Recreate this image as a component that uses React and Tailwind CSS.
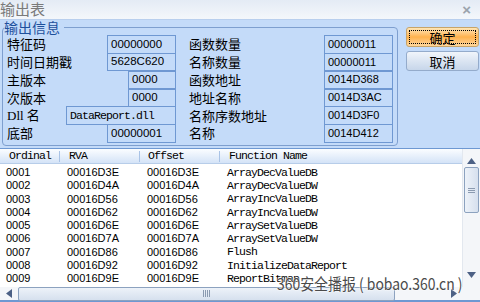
import React from "react";

const leftRows = [
  { label: "特征码", value: "00000000", w: "w-[69px]" },
  { label: "时间日期戳", value: "5628C620", w: "w-[69px]" },
  { label: "主版本", value: "0000", w: "w-[48px]" },
  { label: "次版本", value: "0000", w: "w-[48px]" },
  { label: "Dll 名", value: "DataReport.dll", w: "w-[110px]", mono: true },
  { label: "底部", value: "00000001", w: "w-[69px]" },
];

const rightRows = [
  { label: "函数数量", value: "00000011" },
  { label: "名称数量", value: "00000011" },
  { label: "函数地址", value: "0014D368" },
  { label: "地址名称", value: "0014D3AC" },
  { label: "名称序数地址", value: "0014D3F0" },
  { label: "名称", value: "0014D412" },
];

const exportsList = [
  ["0001", "00016D3E", "ArrayDecValueDB"],
  ["0002", "00016D4A", "ArrayDecValueDW"],
  ["0003", "00016D56", "ArrayIncValueDB"],
  ["0004", "00016D62", "ArrayIncValueDW"],
  ["0005", "00016D6E", "ArraySetValueDB"],
  ["0006", "00016D7A", "ArraySetValueDW"],
  ["0007", "00016D86", "Flush"],
  ["0008", "00016D92", "InitializeDataReport"],
  ["0009", "00016D9E", "ReportBitmap"],
];

const cjk = "font-['Noto_Sans_CJK_SC',sans-serif]";
const mono = "font-['Liberation_Mono','Noto_Sans_CJK_SC',monospace]";
const sans = "font-['Liberation_Sans',sans-serif]";

export default function App() {
  return (
    <div className="relative w-[480px] h-[302px] overflow-hidden bg-[#c4dbf9] flex flex-col">
      {/* title bar */}
      <div className="h-[20px] shrink-0 flex items-start justify-between bg-gradient-to-b from-[#e4ebf5] to-[#f4f7fb] border-b border-[#b9cfee]">
        <span className={`${cjk} text-[15px] leading-[17px] text-[#7a7a7a]`}>输出表</span>
        <span className={`${sans} text-[15px] font-bold leading-[15px] text-[#9aa3ad] mr-[9px] mt-[2px]`}>×</span>
      </div>

      {/* info */}
      <div className="flex shrink-0 h-[128px]">
        <fieldset className="ml-[2px] mt-[0px] w-[396px] h-[126px] border border-[#7e9fcf] rounded-[4px] px-0 pb-0">
          <legend className={`${cjk} text-[14px] leading-[15px] text-[#1d4f9c] ml-[1px] pr-[4px]`}>输出信息</legend>
          <div className="flex">
            <div className="w-[173px] flex flex-col">
              {leftRows.map((r) => (
                <div key={r.label} className="h-[17.8px] flex items-center justify-between">
                  <span
                    className={`${
                      r.mono ? "font-['Liberation_Serif','Noto_Sans_CJK_SC',serif]" : cjk
                    } text-[13px] leading-none text-black ml-[4px]`}
                  >
                    {r.label}
                  </span>
                  <div
                    className={`${r.w} h-[18.5px] -mb-[1px] border-[1.5px] border-[#6f98d2] flex items-center pl-[3px] leading-none ${
                      r.mono ? `${mono} text-[11.5px] tracking-[-0.9px]` : `${sans} text-[11.5px]`
                    }`}
                  >
                    {r.value}
                  </div>
                </div>
              ))}
            </div>
            <div className="flex-1 flex flex-col ml-[13px] mr-[4px]">
              {rightRows.map((r) => (
                <div key={r.label} className="h-[17.8px] flex items-center justify-between">
                  <span className={`${cjk} text-[13px] leading-none text-black`}>{r.label}</span>
                  <div className={`w-[69px] h-[18.5px] -mb-[1px] border-[1.5px] border-[#6f98d2] flex items-center pl-[3px] text-[11px] leading-none ${sans}`}>
                    {r.value}
                  </div>
                </div>
              ))}
            </div>
          </div>
        </fieldset>

        <div className="ml-[8px] mt-[7px] flex flex-col gap-[4px] w-[73px]">
          <button className="h-[20px] rounded-[3px] border border-[#c7a46a] bg-gradient-to-b from-[#ffe6b6] via-[#ffb24c] to-[#ffd79a] p-[2px]">
            <div className={`h-full border border-dotted border-black flex items-center justify-center ${cjk} text-[13px] leading-none`}>
              确定
            </div>
          </button>
          <button className={`h-[20px] rounded-[3px] border border-[#94abcb] bg-gradient-to-b from-[#f1f5fb] via-[#dbe5f2] to-[#c7d6ea] flex items-center justify-center ${cjk} text-[13px] leading-none`}>
            取消
          </button>
        </div>
      </div>

      {/* list */}
      <div className="flex-1 flex flex-col border-t border-[#6e98d2] bg-white min-h-0">
        <div className="flex-1 flex min-h-0">
          <div className="flex-1 flex flex-col overflow-hidden">
            <div className={`h-[15px] shrink-0 flex items-center bg-gradient-to-b from-[#fbfdff] to-[#d4e3f7] border-b border-[#b7cde9] ${mono} text-[11.5px] tracking-[-0.9px] leading-none`}>
              <div className="w-[60px] pl-[9px] border-r border-[#a9c3e6] h-[11px] flex items-center">Ordinal</div>
              <div className="w-[80px] pl-[9px] border-r border-[#a9c3e6] h-[11px] flex items-center">RVA</div>
              <div className="w-[80px] pl-[8px] border-r border-[#a9c3e6] h-[11px] flex items-center">Offset</div>
              <div className="pl-[9px]">Function Name</div>
            </div>
            <div className="pt-[2px] flex flex-col">
              {exportsList.map(([o, a, n]) => (
                <div key={o} className="h-[13.25px] shrink-0 flex items-center whitespace-nowrap">
                  <span className={`w-[60px] pl-[6px] ${sans} text-[11px] leading-none`}>{o}</span>
                  <span className={`w-[80px] pl-[7px] ${sans} text-[11px] leading-none`}>{a}</span>
                  <span className={`w-[80px] pl-[7px] ${sans} text-[11px] leading-none`}>{a}</span>
                  <span className={`pl-[7px] ${mono} text-[11.5px] tracking-[-0.9px] leading-none`}>{n}</span>
                </div>
              ))}
            </div>
          </div>
          {/* vertical scrollbar */}
          <div className="w-[18px] shrink-0 flex flex-col items-center bg-[#f4f6f9] border-l border-[#e3e8ef]">
            <div className="h-[17px] flex items-end justify-center pb-[2px]">
              <svg width="9" height="6" viewBox="0 0 9 6"><path d="M4.5 0L9 6H0z" fill="#4d6185" /></svg>
            </div>
            <div className="mt-[1px] w-[15px] h-[46px] rounded-[2px] border border-[#8ca2bf] bg-gradient-to-r from-[#edf2f9] to-[#d6e0ee] flex items-center justify-center">
              <div className="flex flex-col gap-[1px]">
                <div className="w-[7px] h-[1px] bg-[#8a9ab0]" />
                <div className="w-[7px] h-[1px] bg-[#8a9ab0]" />
                <div className="w-[7px] h-[1px] bg-[#8a9ab0]" />
              </div>
            </div>
            <div className="flex-1" />
            <div className="h-[17px] flex items-start justify-center pt-[2px]">
              <svg width="9" height="6" viewBox="0 0 9 6"><path d="M0 0H9L4.5 6z" fill="#4d6185" /></svg>
            </div>
          </div>
        </div>
        {/* horizontal scrollbar */}
        <div className="h-[15px] shrink-0 flex items-center bg-[#f4f6f9] border-b-[2px] border-[#6e98d2]">
          <div className="w-[18px] flex justify-center">
            <svg width="6" height="9" viewBox="0 0 6 9"><path d="M6 0V9L0 4.5z" fill="#4d6185" /></svg>
          </div>
          <div className="w-[377px] h-[14px] rounded-[2px] border border-[#8ca2bf] bg-gradient-to-b from-[#edf2f9] to-[#d6e0ee] flex items-center justify-center">
            <div className="flex gap-[1px]">
              <div className="w-[1px] h-[7px] bg-[#8a9ab0]" />
              <div className="w-[1px] h-[7px] bg-[#8a9ab0]" />
              <div className="w-[1px] h-[7px] bg-[#8a9ab0]" />
              <div className="w-[1px] h-[7px] bg-[#8a9ab0]" />
            </div>
          </div>
          <div className="flex-1 flex justify-end pr-[5px]">
            <svg width="6" height="9" viewBox="0 0 6 9"><path d="M0 0V9L6 4.5z" fill="#4d6185" /></svg>
          </div>
          <div className="w-[18px]" />
        </div>
      </div>

      {/* watermark */}
      <div
        className={`absolute left-[277px] top-[275px] origin-left scale-x-[0.87] ${cjk} text-[16px] leading-none text-[#4a4a4a] whitespace-nowrap [text-shadow:0_0_2px_#fff,0_0_2px_#fff]`}
      >
        360安全播报 ( bobao.360.cn )
      </div>
    </div>
  );
}
